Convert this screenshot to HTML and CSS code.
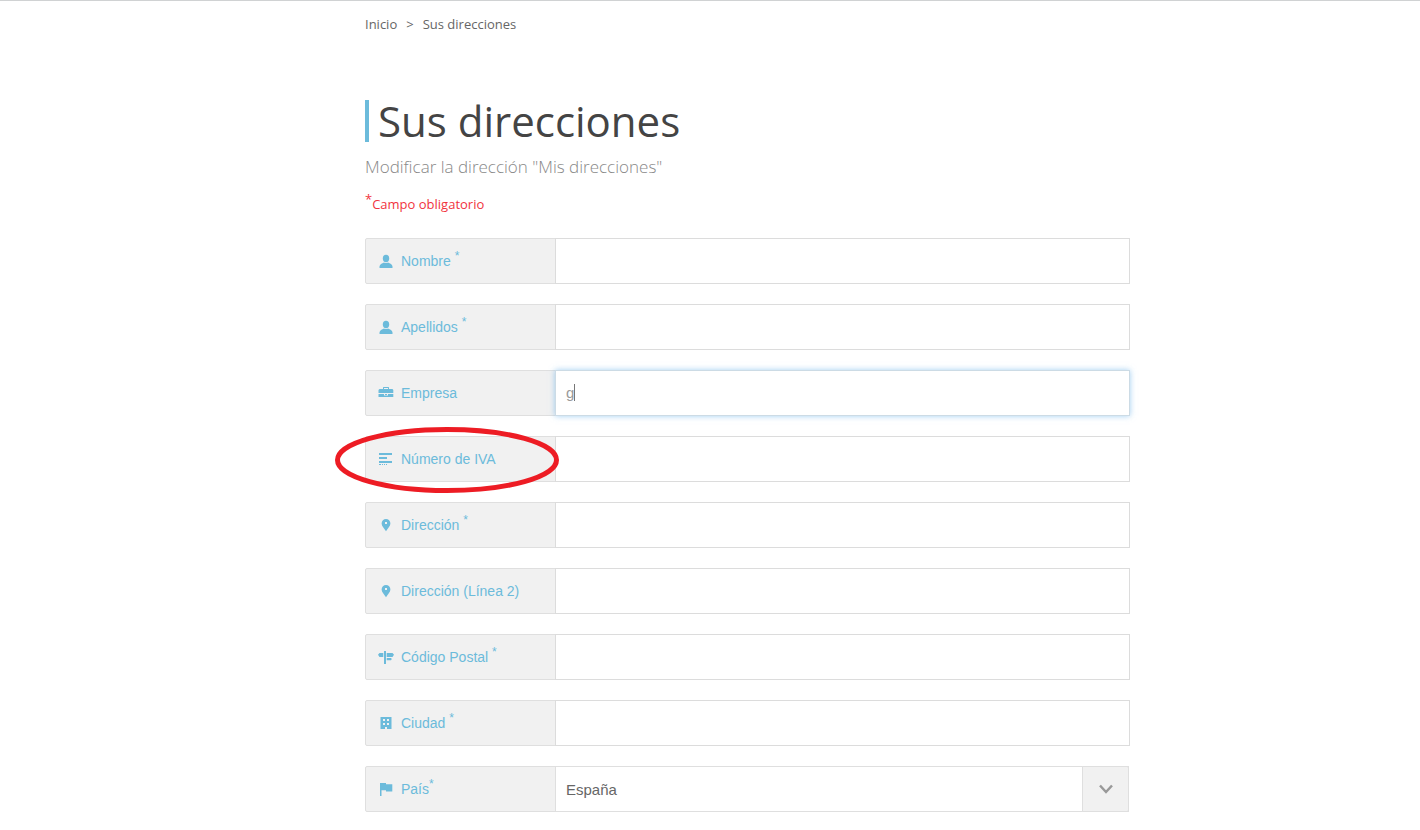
FILE: index.html
```html
<!DOCTYPE html>
<html lang="es">
<head>
<meta charset="utf-8">
<title>Sus direcciones</title>
<link rel="stylesheet" href="styles.css">
</head>
<body>
<div class="page">
  <main class="content">
    <nav class="breadcrumb" aria-label="Ruta">
      <a href="#">Inicio</a><span>&gt;</span><span>Sus direcciones</span>
    </nav>
    <h1 class="title">Sus direcciones</h1>
    <p class="subtitle">Modificar la dirección "Mis direcciones"</p>
    <p class="required"><sup>*</sup>Campo obligatorio</p>
    <form class="form">
      <div class="field">
        <label class="label" for="nombre"><svg class="icon" viewBox="0 0 16 16"><ellipse cx="8" cy="5.500" rx="3.200" ry="3.700"/><path d="M1.500 15v-1.500C1.500 11.500 4 10.300 6 9.500q2 1 4 0c2 .8 4.500 2 4.500 4V15z"/></svg><span>Nombre <sup>*</sup></span></label>
        <input class="input" id="nombre" type="text">
      </div>
      <div class="field">
        <label class="label" for="apellidos"><svg class="icon" viewBox="0 0 16 16"><ellipse cx="8" cy="5.500" rx="3.200" ry="3.700"/><path d="M1.500 15v-1.500C1.500 11.500 4 10.300 6 9.500q2 1 4 0c2 .8 4.500 2 4.500 4V15z"/></svg><span>Apellidos <sup>*</sup></span></label>
        <input class="input" id="apellidos" type="text">
      </div>
      <div class="field">
        <label class="label" for="empresa"><svg class="icon" viewBox="0 0 16 16"><path fill-rule="evenodd" d="M5 4V2.500L5.500 2h5l.5.500V4h3.500l.8 1v3H.5V5l1-1zm1 0h4V3H6zM.5 9H6v1.500h4V9h5.300v3H.5z"/><path d="M7 9h2v1H7z"/></svg><span>Empresa</span></label>
        <input class="input input-active" id="empresa" type="text" value="g">
        <span class="caret"></span>
      </div>
      <div class="field">
        <label class="label" for="iva"><svg class="icon" viewBox="0 0 16 16"><path d="M1 2h13v2H1zM1 6h8v2H1zM1 10h13v2H1zM1 13h2v1H1zM4 13h1v1H4zM6 13h1v1H6zM8 13h1v1H8z"/></svg><span>Número de IVA</span></label>
        <input class="input" id="iva" type="text">
        <svg class="mark" viewBox="0 0 224 66"><ellipse cx="112" cy="33" rx="109.500" ry="30.500"/></svg>
      </div>
      <div class="field">
        <label class="label" for="dir1"><svg class="icon" viewBox="0 0 16 16"><path fill-rule="evenodd" d="M8 2a4.400 4.400 0 0 1 4.400 4.400C12.400 9 9.700 11.200 8 14.300 6.300 11.200 3.600 9 3.600 6.400A4.400 4.400 0 0 1 8 2zM7 5v2h2V5z"/></svg><span>Dirección <sup>*</sup></span></label>
        <input class="input" id="dir1" type="text">
      </div>
      <div class="field">
        <label class="label" for="dir2"><svg class="icon" viewBox="0 0 16 16"><path fill-rule="evenodd" d="M8 2a4.400 4.400 0 0 1 4.400 4.400C12.400 9 9.700 11.200 8 14.300 6.300 11.200 3.600 9 3.600 6.400A4.400 4.400 0 0 1 8 2zM7 5v2h2V5z"/></svg><span>Dirección (Línea 2)</span></label>
        <input class="input" id="dir2" type="text">
      </div>
      <div class="field">
        <label class="label" for="cp"><svg class="icon" viewBox="0 0 16 16"><path d="M6 2h2v13H6zM0 5.800 1.500 4H5.300v4H1.500zM8.700 4h5.800L16 5.800 14.500 8H8.700zM8.700 9h4.300l.8 1-.8 1.200H8.700z"/></svg><span>Código Postal <sup>*</sup></span></label>
        <input class="input" id="cp" type="text">
      </div>
      <div class="field">
        <label class="label" for="ciudad"><svg class="icon" viewBox="0 0 16 16"><path fill-rule="evenodd" d="M2.500 2h11v12H9v-2H7v2H2.500zM5 4v2h2V4zm4 0v2h2V4zM5 8v2h2V8zm4 0v2h2V8z"/></svg><span>Ciudad <sup>*</sup></span></label>
        <input class="input" id="ciudad" type="text">
      </div>
      <div class="field">
        <label class="label" for="pais"><svg class="icon" viewBox="0 0 16 16"><path d="M2 2h6v1.300h6.300V10.500H8V9.200H3.500V15H2z"/></svg><span>País<sup>*</sup></span></label>
        <select class="input select" id="pais"><option>España</option></select>
        <span class="arrow"><svg viewBox="0 0 14 10"><path d="M1 1.500 7 8l6-6.500"/></svg></span>
      </div>
    </form>
  </main>
</div>
</body>
</html>
```

FILE: styles.css
```css
* { box-sizing: border-box; }
body {
  margin: 0;
  background: #fff;
  border-top: 1px solid #d0d2d3;
  color: #777;
  font: 13px/18px "Open Sans", sans-serif;
}
.page { max-width: 1170px; margin: 0 auto; }
.content { margin: 0 165px 0 240px; padding: 14px 0 18px; }
.breadcrumb { display: flex; gap: 9px; color: #666; }
.breadcrumb a { color: inherit; text-decoration: none; }
.title {
  margin: 67px 0 0;
  padding-left: 9px;
  border-left: 4px solid #6cbbdb;
  color: #444;
  font-size: 42px;
  line-height: 42px;
  font-weight: 400;
}
.subtitle {
  margin: 13px 0 0;
  color: #888;
  font-size: 17px;
  line-height: 24px;
  font-weight: 300;
}
.required { margin: 16px 0 25px; color: #f13340; line-height: 18px; }
sup { font-size: 12px; line-height: 0; }
.required sup { font-size: 13px; }
.form { display: grid; gap: 20px; }
.field { position: relative; display: flex; height: 46px; }
.label {
  display: flex;
  align-items: center;
  gap: 7px;
  width: 191px;
  padding-left: 12px;
  background: #f1f1f1;
  border: 1px solid #dfdfdf;
  border-radius: 2px 0 0 2px;
  color: #6cbbdb;
  font: 14px/20px "Liberation Sans", Arial, sans-serif;
}
.icon { width: 16px; height: 16px; fill: #6cbbdb; }
.input {
  flex: 1;
  min-width: 0;
  margin-left: -1px;
  padding: 0 10px;
  background: #fff;
  border: 1px solid #dcdcdc;
  border-radius: 0;
  color: #999;
  font: 15px/20px "Liberation Sans", Arial, sans-serif;
  outline: none;
}
.input-active {
  border-color: #ccdbe5;
  box-shadow: 0 0 6px rgba(102, 175, 233, 0.6);
}
.caret {
  position: absolute;
  left: 209px;
  top: 14px;
  width: 1px;
  height: 17px;
  background: #777;
}
.mark {
  position: absolute;
  left: -30px;
  top: -9px;
  width: 224px;
  height: 66px;
  fill: none;
  stroke: #ed1c24;
  stroke-width: 5;
  pointer-events: none;
}
.select {
  appearance: none;
  margin-right: 1px;
  padding: 2px 60px 0 10px;
  border-color: #dfdfdf;
  color: #666;
}
.arrow {
  position: absolute;
  right: 1px;
  top: 0;
  display: flex;
  align-items: center;
  justify-content: center;
  width: 47px;
  height: 46px;
  background: #f1f1f1;
  border: 1px solid #dfdfdf;
  border-radius: 0 2px 2px 0;
  pointer-events: none;
}
.arrow svg { width: 14px; height: 10px; fill: none; stroke: #999; stroke-width: 2.5; }
```
